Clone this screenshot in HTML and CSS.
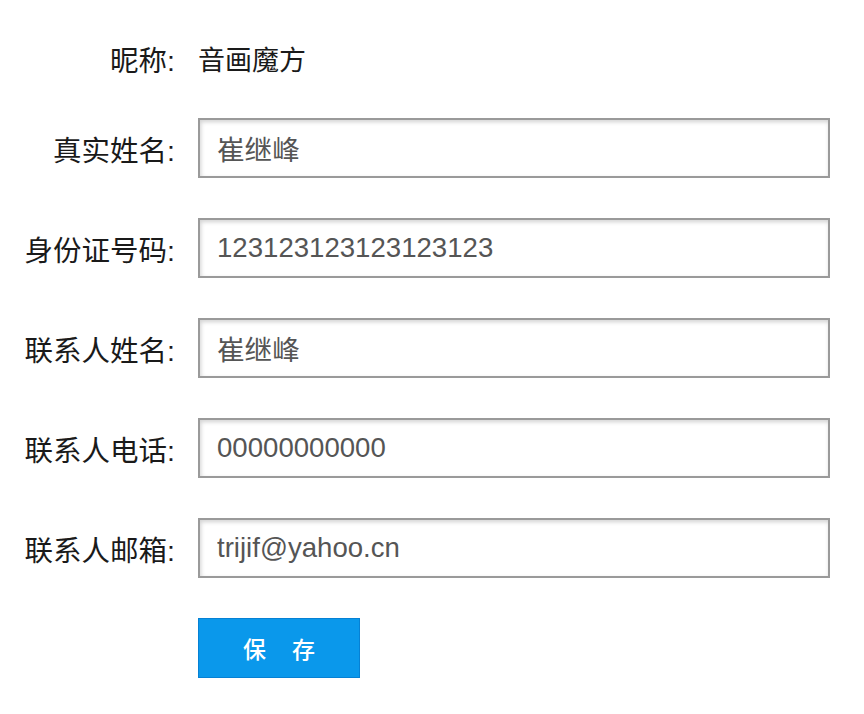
FILE: index.html
```html
<!DOCTYPE html>
<html lang="zh-CN">
<head>
<meta charset="utf-8">
<link rel="stylesheet" href="styles.css">
</head>
<body>
<form class="form">
  <div class="row row-nick">
    <label class="label">昵称:</label>
    <span class="value">音画魔方</span>
  </div>
  <div class="row">
    <label class="label">真实姓名:</label>
    <input class="field" type="text" value="崔继峰">
  </div>
  <div class="row">
    <label class="label">身份证号码:</label>
    <input class="field" type="text" value="123123123123123123">
  </div>
  <div class="row">
    <label class="label">联系人姓名:</label>
    <input class="field" type="text" value="崔继峰">
  </div>
  <div class="row">
    <label class="label">联系人电话:</label>
    <input class="field" type="text" value="00000000000">
  </div>
  <div class="row">
    <label class="label">联系人邮箱:</label>
    <input class="field" type="text" value="trijif@yahoo.cn">
  </div>
  <div class="row">
    <span class="label"></span>
    <button class="btn" type="button">保存</button>
  </div>
</form>
</body>
</html>
```
FILE: styles.css
```css
html, body {
  margin: 0;
  padding: 0;
  background: #fff;
}
body {
  font-family: "Liberation Sans", "Noto Sans CJK SC", sans-serif;
  color: #1a1a1a;
}
.form {
  display: flex;
  flex-direction: column;
  gap: 40px;
  padding-top: 118px;
}
.row {
  display: flex;
  align-items: center;
  height: 60px;
}
.row-nick {
  margin-top: -90px;
  margin-bottom: -10px;
}
.label {
  width: 175px;
  flex: none;
  text-align: right;
  font-size: 28.5px;
  margin-right: 23px;
}
.value {
  font-size: 27px;
  color: #1a1a1a;
}
.field {
  box-sizing: border-box;
  width: 632px;
  height: 60px;
  border: 2px solid #9a9a9a;
  padding: 0 0 0 17px;
  margin: 0;
  font-family: "Liberation Sans", "Noto Sans CJK SC", sans-serif;
  font-size: 27.6px;
  color: #555;
  background: #fff;
  box-shadow: inset 1px 2px 4px rgba(0, 0, 0, 0.18);
  outline: none;
}
.btn {
  box-sizing: border-box;
  width: 162px;
  height: 60px;
  margin: 0;
  padding: 0 0 0 26px;
  border: 1px solid #0681d4;
  background: #0a98eb;
  color: #fff;
  font-family: "Noto Sans CJK SC", sans-serif;
  font-size: 23px;
  font-weight: 500;
  letter-spacing: 26px;
  cursor: pointer;
}
```
